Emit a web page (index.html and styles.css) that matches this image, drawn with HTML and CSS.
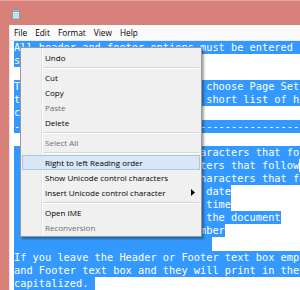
FILE: index.html
```html
<!DOCTYPE html>
<html lang="en">
<head>
  <meta charset="UTF-8" />
  <title>Untitled - Notepad</title>
  <link rel="stylesheet" href="styles.css">
</head>
<body>
  <div class="window">
    <div class="titlebar">
      <svg class="app-icon" width="10" height="12" viewBox="0 0 10 12">
        <rect x="1.5" y="1.5" width="7" height="9.5" fill="#d3e8ec" stroke="#7f9ea8"/>
        <rect x="1.5" y="1.5" width="7" height="2" fill="#a9bcc2" stroke="#7f9ea8"/>
        <line x1="3" y1="6" x2="7" y2="6" stroke="#b5cdd3"/>
        <line x1="3" y1="8" x2="7" y2="8" stroke="#b5cdd3"/>
      </svg>
    </div>
    <div class="frame">
      <div class="client">
        <div class="menubar">
          <span class="menu">File</span>
          <span class="menu">Edit</span>
          <span class="menu">Format</span>
          <span class="menu">View</span>
          <span class="menu">Help</span>
        </div>
        <div class="edit">
          <div class="ln"><span>All header and footer options must be entered in the Page Setup box,</span></div>
          <div class="ln"><span>so they print.</span></div>
          <div class="ln"></div>
          <div class="ln"><span>To edit the header and footer, choose Page Setup from the File menu,</span></div>
          <div class="ln"><span>then type your text. Here is a short list of header and footer</span></div>
          <div class="ln"><span>codes:</span></div>
          <div class="ln"><span>--------------------------------------------------------------</span></div>
          <div class="ln"></div>
          <div class="ln"><span>  &amp;l         Left-align the characters that follow</span></div>
          <div class="ln"><span>  &amp;c         Center the characters that follow</span></div>
          <div class="ln"><span>  &amp;r         Right-align the characters that follow</span></div>
          <div class="ln"><span>  &amp;d         Print the current date</span></div>
          <div class="ln"><span>  &amp;t         Print the current time</span></div>
          <div class="ln"><span>  &amp;f         Print the name of the document</span></div>
          <div class="ln"><span>  &amp;p         Print the page number</span></div>
          <div class="ln"><span>                                </span></div>
          <div class="ln"><span>If you leave the Header or Footer text box empty, nothing will print.</span></div>
          <div class="ln"><span>and Footer text box and they will print in the right place, all</span></div>
          <div class="ln"><span>capitalized. </span></div>
        </div>
      </div>
    </div>

    <div class="ctx">
      <div class="mi">Undo</div>
      <div class="sep"></div>
      <div class="mi">Cut</div>
      <div class="mi">Copy</div>
      <div class="mi off">Paste</div>
      <div class="mi">Delete</div>
      <div class="sep"></div>
      <div class="mi off">Select All</div>
      <div class="sep"></div>
      <div class="mi hot">Right to left Reading order</div>
      <div class="mi">Show Unicode control characters</div>
      <div class="mi">Insert Unicode control character
        <svg class="arrow" width="4" height="7" viewBox="0 0 4 7"><path d="M0 0 L4 3.5 L0 7Z" fill="#000"/></svg>
      </div>
      <div class="sep"></div>
      <div class="mi">Open IME</div>
      <div class="mi off">Reconversion</div>
    </div>
  </div>
</body>
</html>
```

FILE: styles.css
```css
html, body {
  margin: 0;
  padding: 0;
}

body {
  width: 300px;
  height: 290px;
  overflow: hidden;
  background-color: #d8807a;
  font-family: "Open Sans", "Liberation Sans", sans-serif;
}

.window {
  position: relative;
  height: 290px;
  border-top: 1px solid #e3a29d;
  box-sizing: border-box;
}

.titlebar {
  height: 24px;
  display: flex;
  align-items: center;
  padding-left: 11px;
}

.app-icon {
  display: block;
  margin-top: 2px;
}

.frame {
  padding-left: 9px;
}

.client {
  border-left: 1px solid #ece4e4;
  background-color: #fff;
}

.menubar {
  height: 15px;
  display: flex;
  align-items: center;
  background-color: #fbfbfb;
  border-bottom: 1px solid #e8e8e8;
  font-size: 8.3px;
  color: #000;
}

.menu {
  padding: 0 4px;
}

.edit {
  height: 260px;
  padding-left: 4px;
  overflow: hidden;
  font-family: "DejaVu Sans Mono", monospace;
  font-size: 10.3px;
  background-color: #fff;
}

.ln {
  height: 13.1px;
  white-space: pre;
}

.ln span {
  display: inline-block;
  height: 13.1px;
  line-height: 13.1px;
  vertical-align: top;
  background-color: #3399ff;
  color: #fff;
}

/* context menu sits over the text */
.ctx {
  position: absolute;
  left: 20px;
  top: 46px;
  width: 182px;
  box-sizing: border-box;
  padding: 2px 1px 1px;
  border: 1px solid #979797;
  background:
    linear-gradient(to right, transparent 20px, #e2e3e3 20px, #e2e3e3 21px, #fff 21px, #fff 22px, transparent 22px),
    #f0f0f0;
  box-shadow: 2px 2px 2px rgba(0, 0, 0, 0.35);
  font-size: 8px;
  color: #000;
}

.mi {
  height: 15px;
  box-sizing: border-box;
  display: flex;
  align-items: center;
  padding-left: 22px;
  border: 1px solid transparent;
}

.mi.off {
  color: #6d6d6d;
}

.mi.hot {
  background-color: #d9e6f5;
  border-color: #a6c6ea;
}

.arrow {
  margin-left: auto;
  margin-right: 4px;
}

.sep {
  height: 0;
  margin: 2px 1px 1px 21px;
  border-top: 1px solid #d7d7d7;
  border-bottom: 1px solid #fff;
}
```
